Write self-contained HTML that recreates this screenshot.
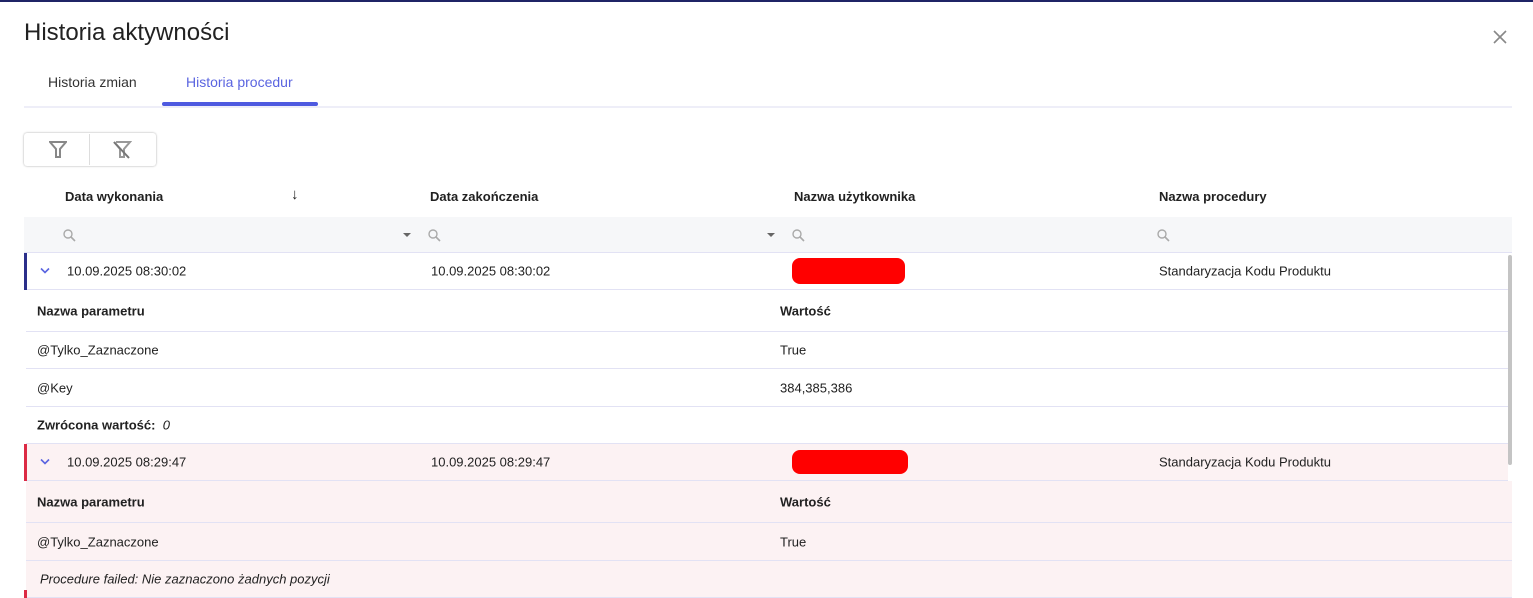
<!DOCTYPE html>
<html><head><meta charset="utf-8"><style>
*{margin:0;padding:0;box-sizing:border-box}
body{width:1533px;height:598px;overflow:hidden;background:#fff;font-family:"Liberation Sans",Arial,sans-serif;color:#212121;position:relative;font-size:13px}
.a{position:absolute}
.b{font-weight:bold}
.row{position:absolute;left:26px;width:1482px;border-bottom:1px solid #e2e2f4}
.t{position:absolute;top:50%;transform:translateY(-50%);white-space:nowrap}
.pink{background:#fcf2f3}
</style></head><body>
<div class="a" style="left:0;top:0;width:1533px;height:2px;background:#1f2466"></div>
<div class="a" style="left:24px;top:19px;font-size:24px;color:#222">Historia aktywności</div>
<svg class="a" style="left:1492px;top:29px" width="16" height="16" viewBox="0 0 16 16"><path d="M2 2L14 14M14 2L2 14" stroke="#888" stroke-width="1.6"/></svg>
<div class="a" style="left:48px;top:74px;font-size:14px;color:#333">Historia zmian</div>
<div class="a" style="left:186px;top:74px;font-size:14px;color:#5a64e0">Historia procedur</div>
<div class="a" style="left:24px;top:106px;width:1488px;height:2px;background:#eeeef8"></div>
<div class="a" style="left:162px;top:102px;width:156px;height:4px;border-radius:2px;background:#4e5ae0"></div>
<div class="a" style="left:24px;top:133px;width:132px;height:33px;border-radius:3px;box-shadow:0 0 2px rgba(0,0,0,.35);background:#fff"></div>
<div class="a" style="left:89px;top:134px;width:1px;height:31px;background:#ddd"></div>
<svg class="a" style="left:49px;top:141px" width="18" height="17" viewBox="0 0 18 17"><path d="M1 1H17L11 8V16H7V8Z" fill="none" stroke="#888" stroke-width="2"/></svg>
<svg class="a" style="left:112px;top:141px" width="20" height="18" viewBox="0 0 20 18"><path d="M4 1H18L12 8V16H8V8L2 1" fill="none" stroke="#999" stroke-width="2"/><path d="M2 1L17 17" stroke="#777" stroke-width="2"/></svg>
<div class="a b" style="left:65px;top:189px">Data wykonania</div>
<div class="a" style="left:291px;top:186px;font-size:15px">↓</div>
<div class="a b" style="left:430px;top:189px">Data zakończenia</div>
<div class="a b" style="left:794px;top:189px">Nazwa użytkownika</div>
<div class="a b" style="left:1159px;top:189px">Nazwa procedury</div>
<div class="a" style="left:24px;top:217px;width:1488px;height:36px;background:#f6f7f9;border-bottom:1px solid #e2e2f4"></div>
<svg class="a" style="left:63px;top:229px" width="13" height="13" viewBox="0 0 13 13"><circle cx="5" cy="5" r="4" fill="none" stroke="#aaa" stroke-width="1.4"/><path d="M8 8L12 12" stroke="#aaa" stroke-width="1.6"/></svg>
<svg class="a" style="left:428px;top:229px" width="13" height="13" viewBox="0 0 13 13"><circle cx="5" cy="5" r="4" fill="none" stroke="#aaa" stroke-width="1.4"/><path d="M8 8L12 12" stroke="#aaa" stroke-width="1.6"/></svg>
<svg class="a" style="left:792px;top:229px" width="13" height="13" viewBox="0 0 13 13"><circle cx="5" cy="5" r="4" fill="none" stroke="#aaa" stroke-width="1.4"/><path d="M8 8L12 12" stroke="#aaa" stroke-width="1.6"/></svg>
<svg class="a" style="left:1157px;top:229px" width="13" height="13" viewBox="0 0 13 13"><circle cx="5" cy="5" r="4" fill="none" stroke="#aaa" stroke-width="1.4"/><path d="M8 8L12 12" stroke="#aaa" stroke-width="1.6"/></svg>
<div class="a" style="left:403px;top:233px;border:4px solid transparent;border-top-color:#666;border-bottom:0"></div>
<div class="a" style="left:767px;top:233px;border:4px solid transparent;border-top-color:#666;border-bottom:0"></div>

<!-- row 1 -->
<div class="a" style="left:24px;top:253px;width:3px;height:37px;background:#2b2f8a"></div>
<div class="row" style="top:253px;left:27px;width:1481px;height:37px">
<svg class="t" style="left:13px" width="10" height="7" viewBox="0 0 10 7"><path d="M1 1L5 5L9 1" fill="none" stroke="#5a64e0" stroke-width="1.6"/></svg>
<span class="t" style="left:40px">10.09.2025 08:30:02</span><span class="t" style="left:404px">10.09.2025 08:30:02</span>
<div class="t" style="left:765px;width:113px;height:26px;border-radius:8px;background:#f00"></div>
<span class="t" style="left:1132px">Standaryzacja Kodu Produktu</span></div>
<div class="row" style="top:290px;height:42px"><span class="t b" style="left:11px">Nazwa parametru</span><span class="t b" style="left:754px">Wartość</span></div>
<div class="row" style="top:332px;height:37px"><span class="t" style="left:11px">@Tylko_Zaznaczone</span><span class="t" style="left:754px">True</span></div>
<div class="row" style="top:369px;height:38px"><span class="t" style="left:11px">@Key</span><span class="t" style="left:754px">384,385,386</span></div>
<div class="row" style="top:407px;height:37px"><span class="t" style="left:11px"><b>Zwrócona wartość:</b>&nbsp; <i>0</i></span></div>
<!-- row 2 -->
<div class="a" style="left:24px;top:444px;width:3px;height:37px;background:#dc2a44"></div>
<div class="row pink" style="top:444px;left:27px;width:1481px;height:37px">
<svg class="t" style="left:13px" width="10" height="7" viewBox="0 0 10 7"><path d="M1 1L5 5L9 1" fill="none" stroke="#5a64e0" stroke-width="1.6"/></svg>
<span class="t" style="left:40px">10.09.2025 08:29:47</span><span class="t" style="left:404px">10.09.2025 08:29:47</span>
<div class="t" style="left:765px;width:116px;height:24px;border-radius:8px;background:#f00"></div>
<span class="t" style="left:1132px">Standaryzacja Kodu Produktu</span></div>
<div class="row pink" style="top:481px;height:42px;width:1486px"><span class="t b" style="left:11px">Nazwa parametru</span><span class="t b" style="left:754px">Wartość</span></div>
<div class="row pink" style="top:523px;height:38px;width:1486px"><span class="t" style="left:11px">@Tylko_Zaznaczone</span><span class="t" style="left:754px">True</span></div>
<div class="row pink" style="top:561px;height:37px;width:1486px"><span class="t" style="left:14px;font-style:italic">Procedure failed: Nie zaznaczono żadnych pozycji</span></div>
<div class="a" style="left:24px;top:590px;width:3px;height:8px;background:#dc2a44"></div>
<div class="a" style="left:1508px;top:255px;width:4px;height:210px;border-radius:2px;background:#c4c4c4"></div>
</body></html>
